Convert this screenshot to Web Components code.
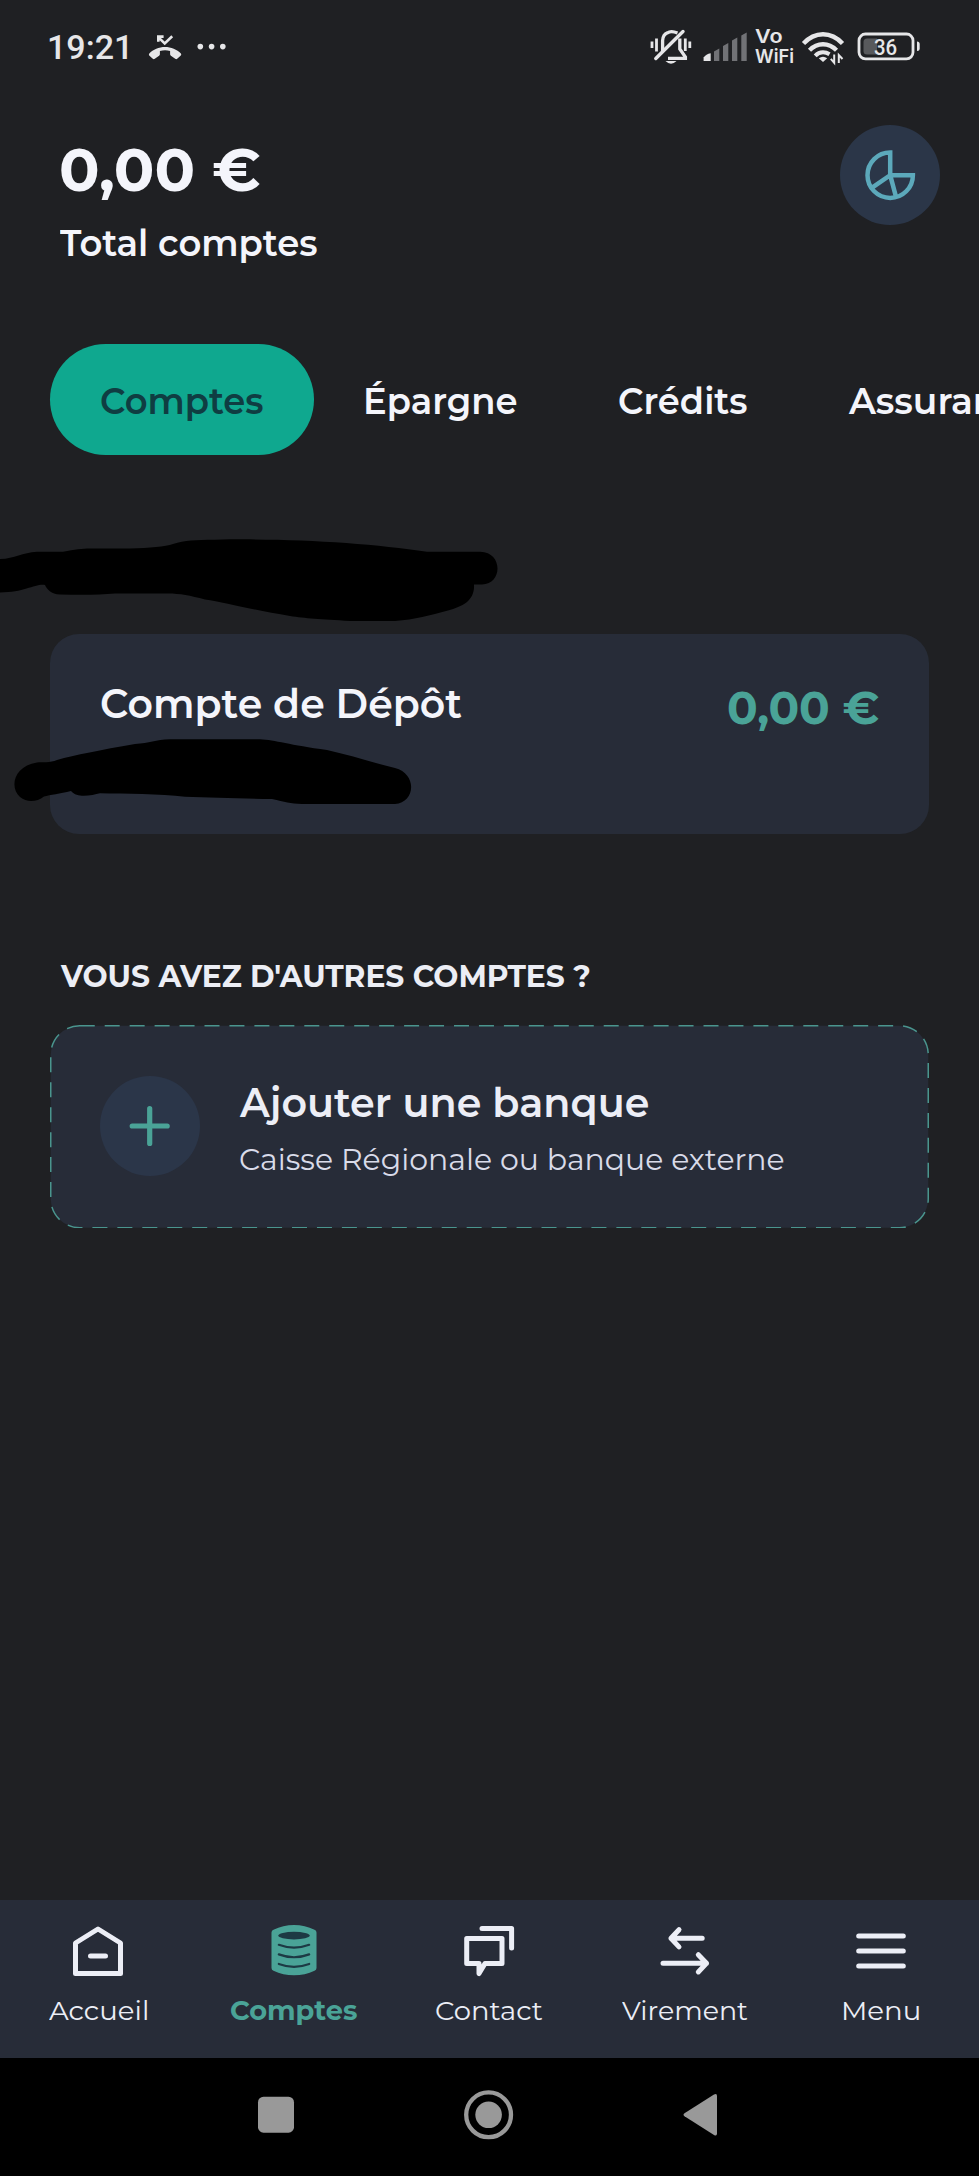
<!DOCTYPE html>
<html lang="fr">
<head>
<meta charset="utf-8">
<title>Comptes</title>
<style>
  html, body { margin: 0; background: #1f2023; }
  body { width: 979px; height: 2176px; overflow: hidden; font-family: Montserrat, Inter, "Open Sans", sans-serif; color: #f4f5fb; }
</style>
</head>
<body>
<bank-app></bank-app>
<script>
const define = (name, html, extra) => {
  const tpl = document.createElement('template');
  tpl.innerHTML = html;
  customElements.define(name, class extends HTMLElement {
    connectedCallback() {
      if (this.shadowRoot) return;
      this.attachShadow({ mode: 'open' }).append(tpl.content.cloneNode(true));
      if (extra) extra.call(this, this.shadowRoot);
    }
  });
};

/* One line of text in a line box `h` pixels high. With `w`, the glyphs span exactly `w` pixels. */
const ctx = document.createElement('canvas').getContext('2d');
define('fit-text', `
  <style>
    :host { display: block; flex: none; white-space: nowrap; overflow: visible; }
    span { display: inline-block; transform-origin: 0 50%; line-height: inherit; vertical-align: top; }
  </style><span><slot></slot></span>`, function (root) {
  this.style.height = this.style.lineHeight = this.getAttribute('h') + 'px';
  if (!this.hasAttribute('w')) return;
  const w = +this.getAttribute('w');
  this.style.width = w + 'px';
  const cs = getComputedStyle(this);
  ctx.font = `${cs.fontWeight} ${cs.fontSize} ${cs.fontFamily}`;
  const m = ctx.measureText(this.textContent.trim());
  const k = w / (m.actualBoundingBoxLeft + m.actualBoundingBoxRight);
  root.querySelector('span').style.transform =
    `translateX(${m.actualBoundingBoxLeft * k}px) scaleX(${k})`;
});

define('status-bar', `
  <style>
    :host { display: flex; align-items: center; height: 94px; box-sizing: border-box; padding-left: 49px; color: #e6e6e8; flex: none; }
    svg { display: block; flex: none; }
    .time { font: 500 34px Roboto, sans-serif; margin-right: 18px; }
    .gap { flex: 1; }
    .vo { display: flex; flex-direction: column; gap: 3px; width: 38px; margin: 0 7px 0 5px; }
    .vo fit-text { font-family: Inter, sans-serif; font-size: 19px; font-weight: 600; }
    .wifi { margin-right: 5px; }
    .battery { position: relative; margin-right: 55px; }
    .battery fit-text { position: absolute; left: 19px; top: 12.5px; font: 500 21.5px Roboto, sans-serif; }
  </style>
  <fit-text class="time" w="78" h="46">19:21</fit-text>
  <svg width="40" height="46" viewBox="145 24 40 46">
    <path d="M149.300 53.500C153 49.500 159 47 165 47s12 2.500 15.900 6.500q.8 1-.1 1.900l-3.600 3.400q-1 .8-2 0l-4.300-3q-.8-.6-.8-1.500v-3.300q-5-1.600-10.200 0v3.300q0 .9-.8 1.500l-4.300 3q-1 .8-2 0l-3.600-3.400q-.7-.9.100-1.900z" fill="currentColor"/>
    <path d="M172.200 36.200L164.700 43.400L158.500 37.400M158.300 41.800V36.600H163.600" fill="none" stroke="currentColor" stroke-width="2.600"/>
  </svg>
  <svg width="45" height="46" viewBox="185 24 45 46" fill="currentColor"><circle cx="200.300" cy="46.600" r="2.800"/><circle cx="211.600" cy="46.600" r="2.800"/><circle cx="222.800" cy="46.600" r="2.800"/></svg>
  <div class="gap"></div>
  <svg width="50" height="46" viewBox="648 24 50 46" fill="none" stroke="currentColor" stroke-width="2.800">
    <path d="M652 41.500V48M656.500 38.500V51.500M685.300 38.500V51M689.800 41.500V48"/>
    <path d="M662.600 51V40.500Q663 34.500 667.500 32.800Q671 30.300 677.500 33" stroke-width="3.300"/>
    <path d="M679.800 38.500V49L685.400 57V58.400H668" stroke-width="3.300"/>
    <path d="M655.800 58.500L683 31.500" stroke-width="3.400" stroke-linecap="round"/>
    <path d="M665.500 61H676.500Q671 66.500 665.500 61Z" fill="currentColor" stroke="none"/>
  </svg>
  <svg width="52" height="46" viewBox="698 24 52 46">
    <path d="M703.600 61V57.500Q706 54 710.700 53.200V61Z" fill="currentColor"/>
    <path d="M714 61V51.500L719.300 48.500V61ZM723 61V46L728.300 43V61ZM732 61V40.500L737.300 37.500V61ZM741.300 61V35.500L746.700 32.500V61Z" fill="#717276"/>
  </svg>
  <div class="vo"><fit-text w="27" h="16.500">Vo</fit-text><fit-text w="38" h="16.500">WiFi</fit-text></div>
  <svg class="wifi" width="50" height="46" viewBox="800 24 50 46" fill="none" stroke="currentColor" stroke-width="4.400">
    <path d="M803.500 43.500Q812 34.200 823 34.200T842.500 43.500M809.500 50.300Q815.500 44.300 823 44.300T836.500 50.300"/>
    <path d="M815.200 55.800Q818.500 52.300 823 52.300Q826.500 52.300 829.500 54.200" stroke-width="4"/>
    <path d="M818.800 58.300Q823 55 827.200 58.300L823 62Z" fill="currentColor" stroke="none"/>
    <path d="M834.200 54.500V62.800L830.800 58.800M838.800 63V55L842.500 59" stroke-width="2"/>
  </svg>
  <div class="battery">
    <svg width="69" height="46" viewBox="855 24 69 46">
      <rect x="859" y="34" width="54" height="24.800" rx="6.500" fill="none" stroke="currentColor" stroke-width="2.800"/>
      <path d="M877 38.500H867Q863.500 38.500 863.500 42V51Q863.500 54.500 867 54.500H877Z" fill="#58595c"/>
      <path d="M917 41.500Q919.700 41.500 919.700 44V48.500Q919.700 51 917 51Z" fill="currentColor"/>
    </svg>
    <fit-text w="23" h="21">36</fit-text>
  </div>`);

define('total-header', `
  <style>
    :host { display: flex; justify-content: space-between; align-items: flex-start; height: 250px; box-sizing: border-box; padding: 31px 39.500px 0 61px; flex: none; }
    .txt { display: flex; flex-direction: column; gap: 26px; padding-top: 15px; }
    .amount { font-size: 60px; font-weight: 700; }
    .label { font-size: 36px; font-weight: 600; margin-left: -1px; }
    .round { width: 100px; height: 100px; border-radius: 50%; background: #2b3648; }
    svg { display: block; }
  </style>
  <div class="txt">
    <fit-text class="amount" w="199" h="60">0,00 €</fit-text>
    <fit-text class="label" w="257" h="34">Total comptes</fit-text>
  </div>
  <div class="round"><svg width="100" height="100" viewBox="0 0 100 100" fill="none" stroke="#5ca9bb" stroke-width="4.500">
    <path d="M50.200 50.200V27.500A22.700 22.700 0 1 0 72.900 50.200H50.200L32.500 62.300M50.200 50.200L56 71.800"/>
  </svg></div>`);

define('tab-list', `
  <style>:host { display: flex; align-items: center; height: 110.500px; padding-left: 50px; flex: none; overflow: hidden; }</style>
  <slot></slot>`);

define('tab-item', `
  <style>
    :host { display: flex; align-items: center; flex: none; height: 110.500px; box-sizing: border-box; padding-top: 4px; margin-right: 102px; font-size: 36px; font-weight: 600; }
    :host([active]) { background: #0fa88f; color: #0f3d42; border-radius: 56px; padding: 4px 51px 0; margin-right: 52px; }
  </style><slot></slot>`);

define('account-card', `
  <style>
    :host { display: flex; justify-content: space-between; align-items: flex-start; position: relative; height: 200px; box-sizing: border-box; margin: 0 50px; padding: 0 50px 0 51px; background: #272c38; border-radius: 29px; flex: none; }
    .name { font-size: 40px; font-weight: 600; margin-top: 46.500px; }
    .sum { font-size: 46px; font-weight: 700; color: #4aa397; margin-top: 51px; }
    svg { position: absolute; left: -50px; top: 90px; }
  </style>
  <fit-text class="name" w="361" h="46">Compte de Dépôt</fit-text>
  <fit-text class="sum" w="151" h="46">0,00 €</fit-text>
  <svg width="430" height="100" viewBox="0 724 430 100"><path d="M37 762.500C42 762 50 763 57 760C75 755 100 750 135 744C150 743 155 739.500 170 739.200H260C275 740 290 745 327 750C350 755 370 762 395 768C418 774 415 803 395 804H302C290 803.500 285 802 272 799C240 798.500 210 797.500 185 796.800C160 793.500 125 794 100 793.200C92 795 78 799 71 791C60 793.500 50 795 44 796.500C37 802 27 803 20 797C9 787 14 766 37 762.500Z"/></svg>`);

define('add-bank', `
  <style>
    :host { display: flex; align-items: center; gap: 39px; position: relative; height: 203.500px; box-sizing: border-box; margin: 0 50px; padding-left: 50px; flex: none; color: #eceef6; }
    .edge { position: absolute; inset: 0; }
    .plus { position: relative; width: 100px; height: 100px; border-radius: 50%; background: #2b3649; }
    .txt { position: relative; display: flex; flex-direction: column; gap: 16.500px; padding-top: 6px; }
    .t { font-size: 40px; font-weight: 600; }
    .s { font-size: 30px; font-weight: 400; color: #d9dbe9; margin-left: .5px; }
    svg { display: block; }
  </style>
  <svg class="edge" width="879" height="203.500"><rect x=".75" y=".75" width="877.500" height="202" rx="29" fill="#272c38" stroke="#4a958e" stroke-width="1.500" stroke-dasharray="15 9.950"/></svg>
  <div class="plus"><svg width="100" height="100" stroke="#4aa397" stroke-width="5.200" stroke-linecap="round"><path d="M49.700 32.500V67.500M32.200 50H67.200"/></svg></div>
  <div class="txt">
    <fit-text class="t" w="409.500" h="44">Ajouter une banque</fit-text>
    <fit-text class="s" w="543.500" h="36">Caisse Régionale ou banque externe</fit-text>
  </div>`);

define('nav-bar', `
  <style>:host { display: grid; grid-template-columns: repeat(5, 1fr); height: 157.500px; background: #272c38; color: #eceef6; flex: none; }</style>
  <slot></slot>`);

define('nav-item', `
  <style>
    :host { display: flex; flex-direction: column; align-items: center; gap: 14.500px; padding-top: 21px; font-size: 27px; font-weight: 400; }
    :host([active]) { color: #4aa397; font-weight: 700; }
    ::slotted(svg) { display: block; flex: none; fill: none; stroke: currentColor; stroke-width: 5px; stroke-linecap: round; stroke-linejoin: round; }
  </style><slot></slot>`);

define('system-bar', `
  <style>
    :host { display: flex; align-items: flex-start; gap: 152px; height: 118.500px; background: #000; box-sizing: border-box; padding: 27px 0 0 246px; flex: none; }
    svg { display: block; fill: #999; }
  </style>
  <svg width="60" height="60"><rect x="12" y="11.700" width="36" height="36" rx="5.500"/></svg>
  <svg width="60" height="60"><circle cx="30.600" cy="29.800" r="13.300"/><circle cx="30.600" cy="29.800" r="22.400" fill="none" stroke="#999" stroke-width="4.300"/></svg>
  <svg width="60" height="60"><path d="M14.500 28.200L44 9.500Q47 8 47 11V48.500Q47 51.500 44 50L14.500 31.200Q12.500 29.700 14.500 28.200Z"/></svg>`);

define('bank-app', `
  <style>
    :host { display: flex; flex-direction: column; width: 979px; height: 2176px; background: #1f2023; overflow: hidden; }
    .owner { display: block; flex: none; }
    h2 { margin: 123px 0 27.500px 60px; font-size: 30px; font-weight: 700; color: #eceef5; }
    .space { flex: 1; }
  </style>
  <status-bar></status-bar>
  <total-header></total-header>
  <tab-list>
    <tab-item active><fit-text w="162" h="40">Comptes</fit-text></tab-item>
    <tab-item><fit-text w="151" h="40">Épargne</fit-text></tab-item>
    <tab-item><fit-text w="128" h="40">Crédits</fit-text></tab-item>
    <tab-item><fit-text h="40">Assurances</fit-text></tab-item>
  </tab-list>
  <svg class="owner" width="979" height="179.500" viewBox="0 454.500 979 179.500"><path d="M0 558.500C15 558 22 552 37 551.200H63C75 549 82 548 90 548H130C150 547.500 165 546 173 543.500C185 539.500 195 539.500 215 539.200C290 537.500 370 542.500 427 551.200H480C503 551 503 584 482 584H474C475 600 463 606 448 610C430 615 415 619 395 620.500H350C320 618.500 305 618 290 615.500C255 610 225 602 205 599C190 595 180 593 168 593H115C100 594.500 80 594.500 60 594C51 593.500 47 589 45 584.500C35 583 25 592 0 592Z"/></svg>
  <account-card></account-card>
  <h2><fit-text w="530" h="40">VOUS AVEZ D'AUTRES COMPTES ?</fit-text></h2>
  <add-bank></add-bank>
  <div class="space"></div>
  <nav-bar>
    <nav-item><svg width="60" height="60"><path d="M7.500 22L30 8L52.500 22V52.500H7.500ZM22.500 35H37.500"/></svg><fit-text w="98" h="30">Accueil</fit-text></nav-item>
    <nav-item active><svg width="60" height="60"><g stroke="none"><path fill="#4aa397" d="M7.500 11.500Q7.500 9.500 9.500 8.700Q19 4 30 4T50.500 8.700Q52.500 9.500 52.500 11.500V47Q52.500 49 50.500 49.800Q41 54.300 30 54.300T9.500 49.800Q7.500 49 7.500 47Z"/><ellipse cx="30" cy="14.600" rx="15.800" ry="3.800" fill="#1d3a44"/></g><path stroke="#1d3a44" stroke-width="2.200" d="M14.800 23.800Q30 29.500 45.200 23.800M14.800 33.400Q30 39.100 45.200 33.400M14.800 43Q30 48.700 45.200 43"/></svg><fit-text w="126" h="30">Comptes</fit-text></nav-item>
    <nav-item><svg width="60" height="60"><path d="M7.700 17.500H43V42.500H26L20 52.500V42.500H7.700ZM23 7.500H52.600V27"/></svg><fit-text w="107" h="30">Contact</fit-text></nav-item>
    <nav-item><svg width="60" height="60"><path d="M47.200 17.300H16M24 8.700L16 17.300L24 25.900M8 42.300H51.500M43.300 33.700L51.500 42.300L43.300 50.900"/></svg><fit-text w="126" h="30">Virement</fit-text></nav-item>
    <nav-item><svg width="60" height="60"><path d="M7.700 15H52.300M7.700 30H52.300M7.700 45H52.300"/></svg><fit-text w="75" h="30">Menu</fit-text></nav-item>
  </nav-bar>
  <system-bar></system-bar>`);
</script>
</body>
</html>
